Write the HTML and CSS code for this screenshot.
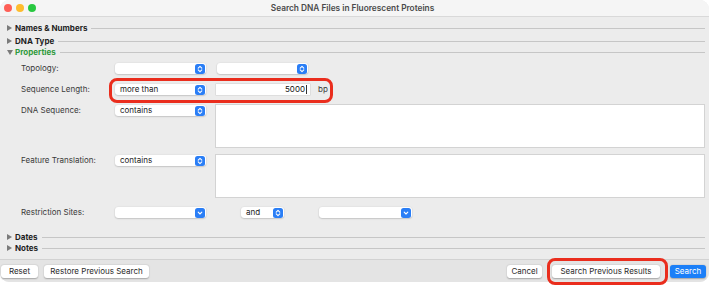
FILE: index.html
```html
<!DOCTYPE html>
<html>
<head>
<meta charset="utf-8">
<link rel="stylesheet" href="styles.css">
</head>
<body>
<div class="window">
  <div class="titlebar">
    <div class="lights"><span class="light red"></span><span class="light yellow"></span><span class="light green"></span></div>
    <div class="title">Search DNA Files in Fluorescent Proteins</div>
  </div>
  <div class="content">
    <div class="sec sec-names"><span class="tri right"></span><span class="sec-name">Names &amp; Numbers</span><span class="rule"></span></div>
    <div class="sec sec-dna"><span class="tri right"></span><span class="sec-name">DNA Type</span><span class="rule"></span></div>
    <div class="sec sec-props"><span class="tri down"></span><span class="sec-name open">Properties</span><span class="rule"></span></div>

    <div class="props">
      <div class="field f-topo">
        <div class="label">Topology:</div>
        <div class="popup"><span class="pv"></span><span class="stepper"><svg viewBox="0 0 10 10"><path d="M3.2 4.1 5 2.4 6.8 4.1M3.2 5.9 5 7.6 6.8 5.9" fill="none" stroke="#fff" stroke-width="1.1" stroke-linecap="round" stroke-linejoin="round"/></svg></span></div>
        <div class="popup"><span class="pv"></span><span class="stepper"><svg viewBox="0 0 10 10"><path d="M3.2 4.1 5 2.4 6.8 4.1M3.2 5.9 5 7.6 6.8 5.9" fill="none" stroke="#fff" stroke-width="1.1" stroke-linecap="round" stroke-linejoin="round"/></svg></span></div>
      </div>
      <div class="field f-len">
        <div class="label">Sequence Length:</div>
        <div class="popup"><span class="pv">more than</span><span class="stepper"><svg viewBox="0 0 10 10"><path d="M3.2 4.1 5 2.4 6.8 4.1M3.2 5.9 5 7.6 6.8 5.9" fill="none" stroke="#fff" stroke-width="1.1" stroke-linecap="round" stroke-linejoin="round"/></svg></span></div>
        <div class="numfield">5000<span class="caret"></span></div>
        <div class="unit">bp</div>
      </div>
      <div class="field f-area">
        <div class="label">DNA Sequence:</div>
        <div class="popup"><span class="pv">contains</span><span class="stepper"><svg viewBox="0 0 10 10"><path d="M3.2 4.1 5 2.4 6.8 4.1M3.2 5.9 5 7.6 6.8 5.9" fill="none" stroke="#fff" stroke-width="1.1" stroke-linecap="round" stroke-linejoin="round"/></svg></span></div>
        <div class="area"></div>
      </div>
      <div class="field f-area f-feat">
        <div class="label">Feature Translation:</div>
        <div class="popup"><span class="pv">contains</span><span class="stepper"><svg viewBox="0 0 10 10"><path d="M3.2 4.1 5 2.4 6.8 4.1M3.2 5.9 5 7.6 6.8 5.9" fill="none" stroke="#fff" stroke-width="1.1" stroke-linecap="round" stroke-linejoin="round"/></svg></span></div>
        <div class="area"></div>
      </div>
      <div class="field f-rest">
        <div class="label">Restriction Sites:</div>
        <div class="popup"><span class="pv"></span><span class="stepper"><svg viewBox="0 0 10 10"><path d="M3.2 4.2 5 6 6.8 4.2" fill="none" stroke="#fff" stroke-width="1.1" stroke-linecap="round" stroke-linejoin="round"/></svg></span></div>
        <div class="popup popup-and"><span class="pv">and</span><span class="stepper"><svg viewBox="0 0 10 10"><path d="M3.2 4.1 5 2.4 6.8 4.1M3.2 5.9 5 7.6 6.8 5.9" fill="none" stroke="#fff" stroke-width="1.1" stroke-linecap="round" stroke-linejoin="round"/></svg></span></div>
        <div class="popup popup-enz"><span class="pv"></span><span class="stepper"><svg viewBox="0 0 10 10"><path d="M3.2 4.2 5 6 6.8 4.2" fill="none" stroke="#fff" stroke-width="1.1" stroke-linecap="round" stroke-linejoin="round"/></svg></span></div>
      </div>
    </div>

    <div class="sec sec-dates"><span class="tri right"></span><span class="sec-name">Dates</span><span class="rule"></span></div>
    <div class="sec sec-notes"><span class="tri right"></span><span class="sec-name">Notes</span><span class="rule"></span></div>
  </div>
  <div class="footer">
    <div class="btn btn-reset">Reset</div>
    <div class="btn btn-restore">Restore Previous Search</div>
    <div class="spacer"></div>
    <div class="btn btn-cancel">Cancel</div>
    <div class="btn btn-prev">Search Previous Results</div>
    <div class="btn btn-primary">Search</div>
  </div>
  <div class="mark mark-len"></div>
  <div class="mark mark-prev"></div>
</div>
</body>
</html>
```

FILE: styles.css
```css
* { box-sizing: border-box; }
html, body { margin: 0; padding: 0; background: #ffffff; }
body {
  font-family: "Inter", "Liberation Sans", sans-serif;
  font-size: 8px;
  color: #2b2b2b;
  width: 712px;
  height: 289px;
  overflow: hidden;
}
.window {
  position: relative;
  width: 709px;
  height: 282px;
  background: #ececec;
  border-radius: 9px;
  overflow: visible;
  display: flex;
  flex-direction: column;
}
.titlebar {
  height: 17px;
  flex: none;
  background: #f5f5f5;
  border-bottom: 1px solid #d9d9d9;
  border-radius: 9px 9px 0 0;
  display: flex;
  align-items: center;
  position: relative;
}
.lights { display: flex; gap: 4px; padding-left: 4px; }
.light { width: 8px; height: 8px; border-radius: 50%; display: block; }
.red { background: #fe5f57; }
.yellow { background: #febc2e; }
.green { background: #28c840; }
.title {
  flex: 1;
  text-align: center;
  font-weight: 600;
  font-size: 8.3px;
  color: #4a4a4a;
  margin-right: 40px;
}
.content {
  flex: 1;
  display: flex;
  flex-direction: column;
  padding-top: 6px;
}
.sec {
  height: 10px;
  display: flex;
  align-items: center;
  padding-left: 7px;
  padding-right: 4px;
}
.sec-dna { margin-top: 3px; }
.sec-props { margin-top: 1px; }
.sec-dates { margin-top: 14px; }
.sec-notes { margin-top: 1px; }
.tri { width: 0; height: 0; display: block; margin-right: 3px; }
.tri.right { border-top: 3px solid transparent; border-bottom: 3px solid transparent; border-left: 5px solid #7a7a7a; }
.tri.down { border-left: 3px solid transparent; border-right: 3px solid transparent; border-top: 5px solid #7a7a7a; margin-left: -0.5px; margin-right: 2.5px; }
.sec-name { font-weight: 700; font-size: 8px; color: #1e1e1e; white-space: nowrap; }
.sec-name.open { color: #2f9a3c; }
.rule { flex: 1; height: 1px; background: #c6c6c6; margin-left: 4px; }

.props { padding-left: 21px; padding-top: 6px; display: flex; flex-direction: column; }
.field { display: flex; align-items: flex-start; }
.label { width: 94px; height: 11px; line-height: 11px; color: #3a3a3a; white-space: nowrap; }
.f-len { margin-top: 10px; }
.f-area { margin-top: 9px; }
.f-feat { margin-top: 6px; }
.f-rest { margin-top: 9px; }
.f-area .label, .f-area .popup { margin-top: 1px; }

.popup {
  width: 91px;
  height: 11px;
  background: #ffffff;
  border-radius: 3px;
  box-shadow: 0 0.5px 1.5px rgba(0,0,0,0.28);
  display: flex;
  align-items: center;
  padding-left: 5px;
  padding-right: 1px;
}
.pv { flex: 1; line-height: 11px; color: #222; }
.stepper {
  width: 10px;
  height: 10px;
  border-radius: 2.5px;
  background: #2a7ef6;
  display: block;
}
.stepper svg { width: 10px; height: 10px; display: block; }
.f-topo .popup + .popup { margin-left: 11px; }
.numfield {
  width: 94px;
  height: 11px;
  margin-left: 10px;
  background: #ffffff;
  box-shadow: 0 0 0 0.5px #d0d0d0;
  text-align: right;
  line-height: 11px;
  padding-right: 3px;
  color: #111;
  display: flex;
  justify-content: flex-end;
  align-items: center;
}
.caret { width: 1px; height: 9px; background: #333; margin-left: 1px; display: block; }
.unit { margin-left: 8px; line-height: 11px; color: #3a3a3a; }
.area {
  margin-left: 9px;
  width: 490px;
  height: 44px;
  background: #ffffff;
  border: 1px solid #d3d3d3;
}
.popup-and { width: 43px; margin-left: 35px; }
.popup-enz { width: 93px; margin-left: 35px; }

.footer {
  height: 23px;
  flex: none;
  border-top: 1px solid #d2d2d2;
  background: #e4e4e4;
  border-radius: 0 0 9px 9px;
  display: flex;
  align-items: center;
  padding: 0 3px 0 1px;
}
.btn {
  height: 13px;
  line-height: 13px;
  background: #ffffff;
  border-radius: 3px;
  box-shadow: 0 0.5px 1.5px rgba(0,0,0,0.28);
  color: #2a2a2a;
  white-space: nowrap;
  padding: 0;
  text-align: center;
}
.btn-reset { width: 37px; }
.btn-restore { margin-left: 6px; width: 105px; }
.spacer { flex: 1; }
.btn-cancel { width: 35px; }
.btn-prev { margin-left: 10px; width: 108px; }
.btn-primary { margin-left: 10px; width: 36px; background: #1b7ff8; color: #ffffff; }

.mark {
  position: absolute;
  border: 3px solid #ea2d1d;
  border-radius: 8px;
  pointer-events: none;
}
.mark-len { left: 109px; top: 78px; width: 224px; height: 25px; }
.mark-prev { left: 547px; top: 258px; width: 121px; height: 27px; }
```
